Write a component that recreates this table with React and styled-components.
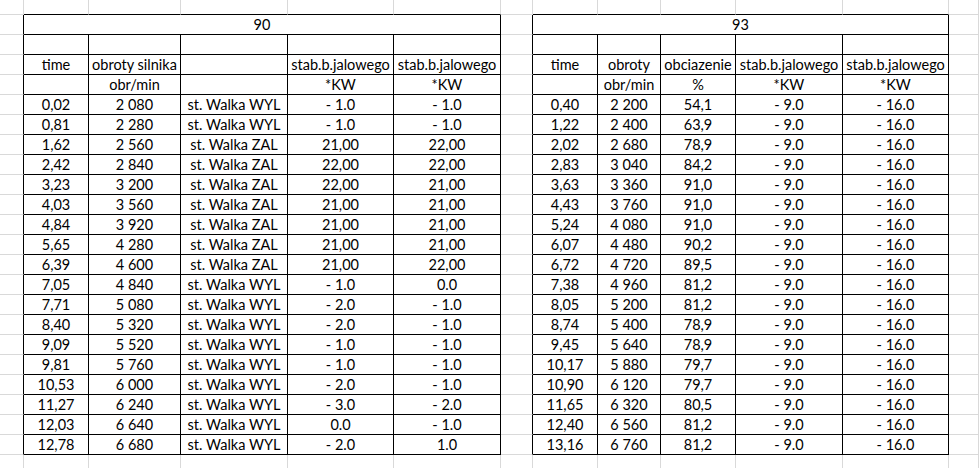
import React from "react";
import styled, { createGlobalStyle } from "styled-components";

const Global = createGlobalStyle`
  html, body { margin: 0; padding: 0; background: #ffffff; overflow: hidden; }
  * { box-sizing: border-box; }
`;

const GRID = "#d9d9d9";
const INK = "#000000";

const COLS = [24, 65, 92, 107, 106, 107, 32, 65, 63, 75, 107, 106];
const ROWS = 24;

const Sheet = styled.div`
  display: grid;
  grid-template-columns: ${COLS.map((w) => `${w}px`).join(" ")} 1fr;
  grid-template-rows: 15px repeat(${ROWS - 1}, 20px);
  width: 979px;
  height: 468px;
  overflow: hidden;
  font-family: Lato, "Open Sans", sans-serif;
  font-size: 14.5px;
  color: #000;
`;

const Cell = styled.div`
  grid-column: ${(p) => p.$col + 1} / span ${(p) => p.$span || 1};
  grid-row: ${(p) => p.$row + 1};
  border-right: 1px solid ${(p) => (p.$rightInk ? INK : GRID)};
  border-bottom: 1px solid ${(p) => (p.$bottomInk ? INK : GRID)};
  text-align: center;
  line-height: 19px;
  white-space: nowrap;
  overflow: visible;
  padding: 0 1px;
`;

const tables = [
  {
    c0: 1,
    c1: 5,
    title: "90",
    header: ["time", "obroty silnika", "", "stab.b.jalowego", "stab.b.jalowego"],
    units: ["", "obr/min", "", "*KW", "*KW"],
    data: [
      ["0,02", "2 080", "st. Walka WYL", "- 1.0", "- 1.0"],
      ["0,81", "2 280", "st. Walka WYL", "- 1.0", "- 1.0"],
      ["1,62", "2 560", "st. Walka ZAL", "21,00", "22,00"],
      ["2,42", "2 840", "st. Walka ZAL", "22,00", "22,00"],
      ["3,23", "3 200", "st. Walka ZAL", "22,00", "21,00"],
      ["4,03", "3 560", "st. Walka ZAL", "21,00", "21,00"],
      ["4,84", "3 920", "st. Walka ZAL", "21,00", "21,00"],
      ["5,65", "4 280", "st. Walka ZAL", "21,00", "21,00"],
      ["6,39", "4 600", "st. Walka ZAL", "21,00", "22,00"],
      ["7,05", "4 840", "st. Walka WYL", "- 1.0", "0.0"],
      ["7,71", "5 080", "st. Walka WYL", "- 2.0", "- 1.0"],
      ["8,40", "5 320", "st. Walka WYL", "- 2.0", "- 1.0"],
      ["9,09", "5 520", "st. Walka WYL", "- 1.0", "- 1.0"],
      ["9,81", "5 760", "st. Walka WYL", "- 1.0", "- 1.0"],
      ["10,53", "6 000", "st. Walka WYL", "- 2.0", "- 1.0"],
      ["11,27", "6 240", "st. Walka WYL", "- 3.0", "- 2.0"],
      ["12,03", "6 640", "st. Walka WYL", "0.0", "- 1.0"],
      ["12,78", "6 680", "st. Walka WYL", "- 2.0", "1.0"],
    ],
  },
  {
    c0: 7,
    c1: 11,
    title: "93",
    header: ["time", "obroty", "obciazenie", "stab.b.jalowego", "stab.b.jalowego"],
    units: ["", "obr/min", "%", "*KW", "*KW"],
    data: [
      ["0,40", "2 200", "54,1"],
      ["1,22", "2 400", "63,9"],
      ["2,02", "2 680", "78,9"],
      ["2,83", "3 040", "84,2"],
      ["3,63", "3 360", "91,0"],
      ["4,43", "3 760", "91,0"],
      ["5,24", "4 080", "91,0"],
      ["6,07", "4 480", "90,2"],
      ["6,72", "4 720", "89,5"],
      ["7,38", "4 960", "81,2"],
      ["8,05", "5 200", "81,2"],
      ["8,74", "5 400", "78,9"],
      ["9,45", "5 640", "78,9"],
      ["10,17", "5 880", "79,7"],
      ["10,90", "6 120", "79,7"],
      ["11,65", "6 320", "80,5"],
      ["12,40", "6 560", "81,2"],
      ["13,16", "6 760", "81,2"],
    ].map((r) => [...r, "- 9.0", "- 16.0"]),
  },
];

const R0 = 1; // title row
const R1 = 22; // last data row

function inTable(r, c) {
  return tables.some((t) => r >= R0 && r <= R1 && c >= t.c0 && c <= t.c1);
}

function tableAt(c) {
  return tables.find((t) => c >= t.c0 && c <= t.c1);
}

function textAt(r, c) {
  const t = tableAt(c);
  if (!t || r < R0 || r > R1) return "";
  const i = c - t.c0;
  if (r === 1) return "";
  if (r === 2) return "";
  if (r === 3) return t.header[i];
  if (r === 4) return t.units[i];
  return t.data[r - 5][i] || "";
}

export default function App() {
  const cells = [];
  const totalCols = COLS.length + 1;
  for (let r = 0; r < ROWS; r++) {
    for (let c = 0; c < totalCols; c++) {
      const t = tableAt(c);
      if (r === 1 && t) {
        if (c !== t.c0) continue;
        cells.push(
          <Cell
            key={`${r}-${c}`}
            $row={r}
            $col={c}
            $span={t.c1 - t.c0 + 1}
            $rightInk
            $bottomInk
          >
            {t.title}
          </Cell>
        );
        continue;
      }
      const inside = inTable(r, c);
      const rightInk = inside || inTable(r, c + 1);
      const bottomInk = inside || inTable(r + 1, c);
      cells.push(
        <Cell
          key={`${r}-${c}`}
          $row={r}
          $col={c}
          $rightInk={rightInk}
          $bottomInk={bottomInk}
        >
          {textAt(r, c)}
        </Cell>
      );
    }
  }
  return (
    <>
      <Global />
      <Sheet>{cells}</Sheet>
    </>
  );
}
